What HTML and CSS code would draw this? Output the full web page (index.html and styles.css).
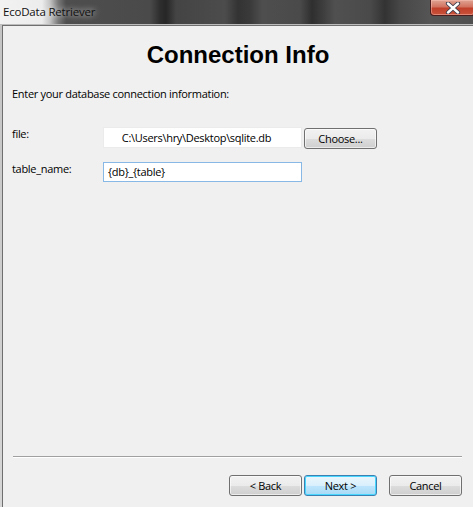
FILE: index.html
```html
<!DOCTYPE html>
<html>
<head>
<meta charset="utf-8">
<link rel="stylesheet" href="styles.css">
</head>
<body>
<div class="window">
  <div class="titlebar">
    <span class="title">EcoData Retriever</span>
    <div class="close">
      <svg width="20" height="12" viewBox="0 0 20 12">
        <path d="M5 1.5 L15 10.5 M15 1.5 L5 10.5" stroke="#3a3a4a" stroke-width="4.2" stroke-linecap="round"/>
        <path d="M5 1.5 L15 10.5 M15 1.5 L5 10.5" stroke="#ffffff" stroke-width="2.4" stroke-linecap="round"/>
      </svg>
    </div>
  </div>
  <div class="frame">
    <div class="client">
      <h1 class="heading">Connection Info</h1>
      <p class="intro">Enter your database connection information:</p>
      <div class="form">
        <div class="row">
          <label class="label">file:</label>
          <div class="field readonly">C:\Users\hry\Desktop\sqlite.db</div>
          <button class="btn choose">Choose...</button>
        </div>
        <div class="row row2">
          <label class="label">table_name:</label>
          <div class="field focused">{db}_{table}</div>
        </div>
      </div>
      <div class="separator"></div>
      <div class="buttons">
        <button class="btn">&lt; Back</button>
        <button class="btn default">Next &gt;</button>
        <button class="btn cancel">Cancel</button>
      </div>
    </div>
  </div>
</div>
</body>
</html>
```

FILE: styles.css
```css
html, body {
  margin: 0;
  padding: 0;
}
body {
  width: 473px;
  height: 507px;
  overflow: hidden;
  font-family: "Open Sans", "Noto Sans", sans-serif;
  font-size: 11px;
  letter-spacing: -0.3px;
  color: #000;
}
.window {
  width: 473px;
  height: 507px;
  display: flex;
  flex-direction: column;
  background: linear-gradient(to bottom, #c8c8c8, #d8d8d8);
}
.titlebar {
  height: 24px;
  flex: none;
  display: flex;
  align-items: flex-start;
  justify-content: space-between;
  background:
    linear-gradient(to right,
      #f2f2f2 0px, #ececec 42px, #c4c4c4 50px, #7a7a7a 58px, #4e4e4e 66px,
      #4a4a4a 150px, #2e2e2e 160px, #262626 166px, #444 176px,
      #4c4c4c 225px, #333 238px, #3a3a3a 250px, #4e4e4e 262px,
      #4a4a4a 300px, #2f2f2f 312px, #3c3c3c 322px, #505050 335px,
      #4a4a4a 370px, #333 385px, #474747 400px, #555 430px, #4f4f4f 473px);
}
.title {
  padding: 5px 0 0 3px;
  font-family: "Open Sans", "Noto Sans", sans-serif;
  font-size: 11.5px;
  letter-spacing: -0.2px;
  line-height: 14px;
  color: #111;
  text-shadow: 0 0 6px #fff;
}
.close {
  width: 45px;
  height: 16px;
  margin-right: -2px;
  box-sizing: border-box;
  border: 1px solid #4a1c1c;
  border-top: none;
  border-radius: 0 0 4px 4px;
  background: linear-gradient(to bottom, #e0a392 0%, #d27461 45%, #c1402b 55%, #c9523a 100%);
  display: flex;
  align-items: center;
  justify-content: center;
  box-shadow: inset 0 0 0 1px rgba(255, 200, 190, 0.45);
}
.frame {
  flex: 1;
  display: flex;
  border-top: 1px solid #bcbcbc;
  padding-left: 2px;
  min-height: 0;
  background: linear-gradient(to bottom, #c4c4c4, #d6d6d6);
}
.client {
  flex: 1;
  display: flex;
  flex-direction: column;
  background: #f0f0f0;
  border-top: 1px solid #6f6f6f;
  border-left: 1px solid #6f6f6f;
}
.heading {
  margin: 15px 0 0 0;
  font-family: "Liberation Sans", Arial, sans-serif;
  font-weight: bold;
  font-size: 24px;
  letter-spacing: 0;
  line-height: 28px;
  text-align: center;
  color: #000;
}
.intro {
  margin: 17px 0 0 9px;
  line-height: 15px;
}
.form {
  margin: 26px 0 0 9px;
  display: flex;
  flex-direction: column;
  gap: 13px;
}
.row {
  display: flex;
  align-items: flex-start;
}
.label {
  width: 91px;
  flex: none;
  line-height: 15px;
  margin-top: -1px;
}
.field {
  width: 199px;
  height: 21px;
  box-sizing: border-box;
  background: #fff;
  line-height: 15px;
  padding-top: 2px;
  white-space: nowrap;
}
.readonly {
  border: 1px solid #ebebeb;
  text-align: center;
  padding-top: 2px;
  padding-right: 12px;
}
.focused {
  height: 20px;
  border: 1px solid #88b9e6;
  padding-left: 4px;
  padding-top: 1px;
}
.btn {
  width: 73px;
  height: 21px;
  box-sizing: border-box;
  border: 1px solid #707070;
  border-radius: 3px;
  background: linear-gradient(to bottom, #f2f2f2 0%, #ebebeb 50%, #dddddd 51%, #cfcfcf 100%);
  box-shadow: inset 0 0 0 1px rgba(255, 255, 255, 0.6);
  font-family: "Open Sans", "Noto Sans", sans-serif;
  font-size: 11px;
  letter-spacing: -0.3px;
  line-height: 15px;
  color: #000;
  padding: 0;
}
.choose {
  margin-left: 2px;
  margin-top: 1px;
}
.separator {
  margin: auto 11px 0 10px;
  height: 1px;
  background: #a0a0a0;
  border-bottom: 1px solid #ffffff;
}
.buttons {
  display: flex;
  justify-content: flex-end;
  gap: 2px;
  margin: 17px 11px 11px 0;
}
.default {
  border-color: #3c7fb1;
  background: linear-gradient(to bottom, #eaf6fd 0%, #d9f0fc 50%, #bee6fd 51%, #a7d9f5 100%);
  box-shadow: inset 0 0 0 1px #48d7fe;
}
.cancel {
  margin-left: 10px;
}
```
